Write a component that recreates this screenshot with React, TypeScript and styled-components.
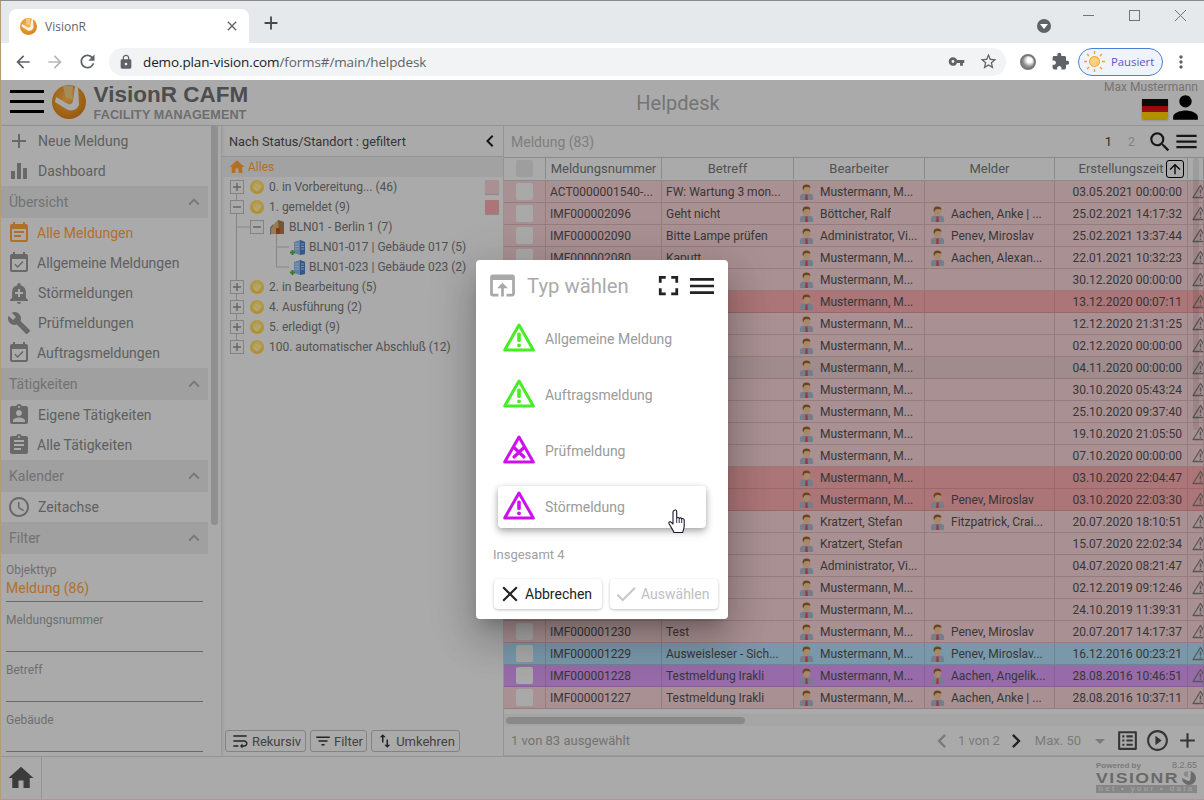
import React from 'react';
import styled, { createGlobalStyle } from 'styled-components';
import {
  MdAdd, MdEqualizer, MdExpandLess, MdEventNote, MdEventAvailable, MdAddAlert, MdBuild, MdAssignmentInd,
  MdAssignment, MdAccessTime, MdHome, MdChevronLeft, MdChevronRight, MdSearch, MdMenu, MdArrowDropDown,
  MdListAlt, MdPlayCircleOutline, MdPerson, MdArrowUpward, MdOpenInBrowser, MdFullscreen, MdClose, MdCheck,
  MdWrapText, MdFilterList, MdSwapVert, MdArrowBack, MdArrowForward, MdRefresh, MdLock, MdVpnKey, MdStarBorder,
  MdExtension, MdMoreVert,
} from 'react-icons/md';

const Global = createGlobalStyle`
  html, body { margin: 0; padding: 0; overflow: hidden; background: #fff; }
  * { box-sizing: border-box; }
`;

const Root = styled.div`
  position: relative; width: 1204px; height: 800px; overflow: hidden; display: flex; flex-direction: column;
  border-top: 1px solid #8a8a8a; border-left: 1px solid #b69a78; border-bottom: 1px solid #b69a78;
  font-family: Roboto, "Liberation Sans", sans-serif;
`;

/* browser chrome */
const TabStrip = styled.div`
  height: 42px; flex: none; background: #e6e9ec; display: flex; align-items: flex-end; padding-left: 8px; position: relative;
`;
const Tab = styled.div`
  width: 240px; height: 34px; background: #fff; border-radius: 8px 8px 0 0; display: flex; align-items: center;
  padding: 0 9px 0 11px; color: #5f6368; font: 12px "Open Sans", "Noto Sans", sans-serif;
`;
const TabTitle = styled.span` margin-left: 8px; flex: 1; `;
const NewTab = styled.div` margin: 0 0 6px 10px; height: 28px; width: 24px; display: flex; align-items: center; justify-content: center; color: #45494d; `;
const Spacer = styled.div` flex: 1; `;
const ProfileDot = styled.div`
  width: 14px; height: 14px; border-radius: 50%; background: #5f6368; position: absolute; left: 1036px; top: 18px;
  &::after { content: ''; position: absolute; left: 3px; top: 5px; border: 4px solid transparent; border-top: 5px solid #fff; border-bottom: 0; }
`;
const WinControls = styled.div` position: absolute; right: 1px; top: 0; height: 30px; display: flex; color: #70757a; `;
const WinBtn = styled.div` width: 46px; height: 29px; display: flex; align-items: center; justify-content: center; `;

const BrowserBar = styled.div` height: 37px; flex: none; background: #fff; display: flex; align-items: center; padding-left: 6px; color: #5f6368; position: relative; `;
const NavBtn = styled.div<{ $dim?: boolean }>` width: 32px; display: flex; justify-content: center; color: ${p => (p.$dim ? '#b4b7ba' : '#5f6368')}; `;
const Address = styled.div`
  margin-left: 6px; width: 897px; height: 28px; border-radius: 14px; background: #f1f3f4; display: flex; align-items: center;
  padding: 0 2px 0 9px; font: 13.5px "Open Sans", "Noto Sans", sans-serif; color: #5f6368;
`;
const Url = styled.span` margin-left: 9px; flex: 1; letter-spacing: -0.12px; b { font-weight: 400; color: #202124; } `;
const AddrIcon = styled.span` width: 32px; display: flex; justify-content: center; `;
const ExtIcon = styled.div` width: 32px; display: flex; justify-content: center; `;
const OrbSlot = styled(ExtIcon)` margin-left: 6px; `;
const Orb = styled.div` width: 16px; height: 16px; border-radius: 50%; border: 2px solid #777; background: radial-gradient(circle at 62% 35%, #fff 0 22%, #888 62%); `;
const Paused = styled.div`
  margin-left: 2px; width: 85px; height: 28px; border: 1px solid #4a80d8; border-radius: 14px; background: #eef3fc; display: flex; align-items: center;
  padding-left: 4px; gap: 5px; font: 11.3px "Open Sans", "Noto Sans", sans-serif; color: #5a58c4; white-space: nowrap;
`;
const DotsBtn = styled.div` margin-left: 2px; width: 32px; display: flex; justify-content: center; color: #5f6368; `;

/* app header */
const App = styled.div` flex: 1; display: flex; flex-direction: column; min-height: 0; background: #f4f4f4; `;
const Header = styled.header` height: 46px; flex: none; border-bottom: 1px solid #d4d4d4; display: flex; align-items: stretch; padding-left: 9px; `;
const Burger = styled.div`
  width: 34px; margin-top: 10px; height: 23px; display: flex; flex-direction: column; justify-content: space-between;
  span { height: 3.4px; background: #000; display: block; }
`;
const LogoBox = styled.div` margin: 5px 0 0 8px; `;
const Brand = styled.div` margin: 2px 0 0 8px; width: 160px; font-family: "Liberation Sans", Arial, sans-serif; font-weight: 700; `;
const BrandTop = styled.div` font-size: 22.5px; line-height: 26px; color: #6f6f6f; white-space: nowrap; `;
const BrandSub = styled.div` font-size: 12.6px; line-height: 13px; margin-top: 1px; color: #9d9d9d; white-space: nowrap; letter-spacing: 0.1px; `;
const PageTitle = styled.div` width: 862px; text-align: center; font-size: 20px; line-height: 46px; color: #a8a8a8; `;
const UserBox = styled.div` flex: 1; display: flex; flex-direction: column; align-items: flex-end; padding-right: 6px; `;
const UserName = styled.div` font-size: 12px; line-height: 15px; color: #aea69e; white-space: nowrap; `;
const UserIcons = styled.div` display: flex; align-items: center; gap: 5px; margin-top: 0; color: #000; `;
const Flag = styled.div` width: 26px; height: 20px; margin-top: 2px; background: linear-gradient(#111 0 34%, #dd1111 34% 67%, #fc0 67%); box-shadow: 0 1px 2px rgba(0,0,0,.3); `;
const PersonSlot = styled.div` width: 25px; height: 25px; display: flex; align-items: center; justify-content: center; svg { flex: none; } `;

const Body = styled.div` flex: 1; min-height: 0; display: flex; `;

/* sidebar */
const Sidebar = styled.aside` width: 221px; flex: none; display: flex; overflow: hidden; border-right: 1px solid #dcdcdc; box-shadow: 1px 0 3px rgba(0,0,0,.08); `;
const SideContent = styled.div` width: 207px; flex: none; `;
const SideTrack = styled.div` flex: 1; padding: 0 3px 0 3px; `;
const SideThumb = styled.div` width: 7px; height: 399px; background: #cecece; border-radius: 0 0 3px 3px; `;
const SideItem = styled.div<{ $active?: boolean; $tight?: boolean }>`
  height: 30px; display: flex; align-items: center; padding-left: 6px; gap: ${p => (p.$tight ? '6px' : '7px')}; font-size: 14px; white-space: nowrap;
  color: ${p => (p.$active ? '#ffa139' : '#8a8a8a')};
  svg { color: ${p => (p.$active ? '#ffa139' : '#969696')}; flex: none; }
`;
const Section = styled.div`
  height: 32px; background: #e5e5e5; display: flex; align-items: center; justify-content: space-between; padding: 0 3px 0 8px; font-size: 14px; color: #a4a4a4;
  svg { color: #acacac; }
`;
const Field = styled.div` height: 50px; margin: 0 5px 0 5px; border-bottom: 1px solid #969696; padding-top: 11px; `;
const FirstField = styled(Field)` margin-top: -2px; `;
const FieldLabel = styled.div` font-size: 12px; line-height: 15px; color: #a0a0a0; `;
const FieldValue = styled.div` font-size: 14px; line-height: 18px; margin-top: 1px; color: #ffa139; `;

/* tree */
const TreePanel = styled.section` width: 282px; flex: none; display: flex; flex-direction: column; border-right: 1px solid #d4d4d4; `;
const TreeHead = styled.div`
  height: 31px; flex: none; border-bottom: 1px solid #d4d4d4; display: flex; align-items: center; justify-content: space-between; padding: 0 1px 0 7px;
  font-size: 12.75px; color: #4d4d4d; svg { color: #222; }
`;
const TreeRoot = styled.div` height: 20px; flex: none; background: #e9e9e9; display: flex; align-items: center; padding-left: 6px; gap: 2px; font-size: 12px; color: #ffa139; svg { color: #ffa139; } `;
const Tree = styled.div` position: relative; flex: 1; `;
const TreeGuides = styled.svg` position: absolute; left: 0; top: 0; `;
const TreeRow = styled.div<{ $level: number }>`
  position: relative; height: 20px; display: flex; align-items: center; gap: 5px; padding-left: ${p => 8 + p.$level * 20}px; font-size: 12px; color: #767676; white-space: nowrap;
`;
const TreeLabel = styled.span` margin-left: 0; `;
const Tag = styled.span<{ $strong?: boolean }>`
  position: absolute; left: 263px; top: 3px; width: 14px; height: 14px; border-radius: 1px; box-shadow: 0 1px 1px rgba(0,0,0,.2);
  background: ${p => (p.$strong ? '#f6a8ab' : '#f3ced2')};
`;
const TreeActions = styled.div` height: 30px; flex: none; display: flex; gap: 4px; padding: 0 0 4px 3px; align-items: flex-end; `;
const SmallBtn = styled.div<{ $w: number }>`
  width: ${p => p.$w}px; height: 22px; border: 1px solid #bcbcbc; border-radius: 3px; display: flex; align-items: center; justify-content: center; gap: 2px;
  font-size: 13px; color: #5e5e5e; svg { color: #333; flex: none; }
`;

/* main */
const Main = styled.main` flex: 1; min-width: 0; display: flex; flex-direction: column; `;
const MainHead = styled.div` height: 31px; flex: none; display: flex; align-items: center; padding: 0 4px 0 7px; font-size: 14px; color: #b5b5b5; `;
const PageNo = styled.span<{ $on?: boolean }>` font-size: 13px; width: 23px; text-align: center; color: ${p => (p.$on ? '#444' : '#bcbcbc')}; `;
const HeadIcons = styled.div` display: flex; align-items: center; margin-left: 4px; color: #222; `;
const TableWrap = styled.div` position: relative; flex: 1; min-height: 0; overflow: hidden; `;
const COLS = '42px 116px 132px 131px 130px 133px 16px';
const HeadRow = styled.div`
  display: grid; grid-template-columns: ${COLS}; height: 24px; padding-bottom: 1px; border-top: 1px solid #c8c8c8; border-bottom: 1px solid #c8c8c8; font-size: 13px; color: #767676;
`;
const HeadCell = styled.div`
  position: relative; display: flex; align-items: center; justify-content: center; border-right: 1px solid #c8c8c8; white-space: nowrap;
`;
const Row = styled.div<{ $bg: string }>`
  display: grid; grid-template-columns: ${COLS}; height: 22px; background: ${p => p.$bg}; border-bottom: 1px solid rgba(120,80,85,.22); font-size: 12px; color: #505050;
`;
const Cell = styled.div<{ $right?: boolean }>`
  display: flex; align-items: center; gap: 6px; padding: 0 ${p => (p.$right ? '5px' : '4px')} 0 4px; border-right: 1px solid rgba(120,80,85,.22); min-width: 0;
  justify-content: ${p => (p.$right ? 'flex-end' : 'flex-start')}; white-space: nowrap; overflow: hidden;
`;
const CheckCell = styled(Cell)` justify-content: center; padding: 0; `;
const CheckBox = styled.span<{ $head?: boolean }>` width: 17px; height: 17px; border-radius: 2px; background: ${p => (p.$head ? '#e3e3e3' : '#f3f3f3')}; flex: none; `;
const Txt = styled.span` overflow: hidden; text-overflow: ellipsis; `;
const SortBtn = styled.span`
  position: absolute; right: 3px; top: 2px; width: 18px; height: 18px; border: 1px solid #000; border-radius: 3px; display: flex; align-items: center; justify-content: center; color: #000;
`;
const VThumb = styled.div` position: absolute; right: 5px; top: 1px; width: 6px; height: 272px; border-radius: 3px; background: rgba(0,0,0,.08); `;
const HScroll = styled.div` height: 12px; flex: none; background: #ededed; padding: 3px 0 0 2px; `;
const HThumb = styled.div` width: 239px; height: 7px; border-radius: 4px; background: #c5c5c5; `;
const StatusBar = styled.div` height: 30px; flex: none; display: flex; align-items: center; padding: 0 4px 0 7px; font-size: 13px; color: #a4a4a4; border-bottom: 1px solid #dcdcdc; `;
const Pager = styled.div` display: flex; align-items: center; color: #b0b0b0; `;
const PagerText = styled.span` margin: 0 2px 0 2px; `;
const MaxText = styled.span` margin-left: 5px; margin-right: 7px; `;
const Dark = styled.span` display: flex; color: #333; `;
const Tools = styled.div` display: flex; align-items: center; color: #4c4c4c; gap: 5px; margin-left: 3px; `;

/* footer */
const Footer = styled.footer` height: 43px; flex: none; border-top: 1px solid #d4d4d4; display: flex; `;
const HomeBtn = styled.div` width: 41px; border-right: 1px solid #d4d4d4; display: flex; align-items: center; justify-content: center; color: #555; `;
const Powered = styled.div` margin-left: auto; width: 101px; margin-right: 7px; padding-top: 3px; font-family: "Liberation Sans", Arial, sans-serif; `;
const PoweredTop = styled.div` display: flex; justify-content: space-between; font-size: 8px; line-height: 11px; font-weight: 700; color: #aeaeae; span + span { font-size: 9px; font-weight: 400; color: #a6a6a6; } `;
const PoweredMid = styled.div` display: flex; justify-content: space-between; align-items: center; height: 13px; color: #989898; svg { flex: none; } `;
const PoweredWord = styled.span` font-size: 15.5px; font-weight: 700; letter-spacing: 1.3px; display: inline-block; transform: scaleX(1.14); transform-origin: left; `;
const Band = styled.div` margin-top: 1px; height: 8px; background: #c0c0c0; color: #efefef; font-size: 8px; line-height: 8px; letter-spacing: 2.3px; text-align: center; white-space: nowrap; overflow: hidden; `;

/* dialog */
const Scrim = styled.div` position: absolute; left: -1px; right: 0; top: 79px; bottom: 0; background: rgba(0,0,0,.3); display: flex; align-items: center; justify-content: center; `;
const Modal = styled.div`
  width: 252px; height: 359px; background: #fff; border-radius: 4px; position: relative; display: flex; flex-direction: column;
  box-shadow: 0 11px 15px -7px rgba(0,0,0,.2), 0 24px 38px 3px rgba(0,0,0,.14), 0 9px 46px 8px rgba(0,0,0,.12);
`;
const ModalHead = styled.div` height: 51px; flex: none; display: flex; align-items: center; padding: 0 10px 0 10px; `;
const ModalIcon = styled.span` display: flex; color: #a9a9a9; `;
const ModalTitle = styled.div` margin-left: 8px; flex: 1; font-size: 20.3px; color: #aaa; white-space: nowrap; `;
const ModalTools = styled.div` display: flex; align-items: center; color: #222; gap: 1px; `;
const TypeList = styled.div` display: flex; flex-direction: column; padding-left: 22px; `;
const TypeItem = styled.div<{ $hover?: boolean }>`
  height: 42px; width: 208px; margin: 7px 0; display: flex; align-items: center; padding-left: 5px; gap: 10px; font-size: 14px; color: #9b9b9b; border-radius: 4px;
  box-shadow: ${p => (p.$hover ? '0 2px 6px rgba(0,0,0,.3), 0 6px 10px rgba(0,0,0,.1)' : 'none')};
  svg { margin-bottom: 4px; }
`;
const Total = styled.div` margin: 12px 0 0 17px; font-size: 13px; line-height: 16px; color: #a0a0a0; `;
const ModalActions = styled.div` display: flex; gap: 8px; margin: 16px 0 0 18px; `;
const ActionBtn = styled.div<{ $off?: boolean }>`
  width: 108px; height: 30px; border-radius: 4px; display: flex; align-items: center; padding-left: 3px; gap: 2px; font-size: 14px;
  color: ${p => (p.$off ? '#c0c0c0' : '#222')}; box-shadow: 0 1px 3px rgba(0,0,0,.25);
  svg { color: ${p => (p.$off ? '#c8c8c8' : '#222')}; flex: none; }
`;
const HandCursor = styled.svg` position: absolute; left: 192px; top: 249px; `;

/* drawings */
const Sphere = ({ size }: { size: number }) => (
  <svg width={size} height={size} viewBox="0 0 34 34">
    <defs>
      <radialGradient id="sph" cx="45%" cy="40%" r="65%"><stop offset="0" stopColor="#ffb84a" /><stop offset="1" stopColor="#d97a10" /></radialGradient>
    </defs>
    <circle cx="17" cy="17" r="17" fill="url(#sph)" />
    <path d="M11 1 L21 0.5 L20.5 15 L13.5 12 Z" fill="#f3c77c" />
    <path d="M4 12 L16 19 Q20 20 21 16 L23 1 L26 2.5 L27 20 Q24 27 16 25 L3 17 Z" fill="#f2f2f2" />
  </svg>
);
const GraySphere = () => (
  <svg width="16" height="14" viewBox="0 0 34 30">
    <path d="M17 0 A15 15 0 1 1 2 15 L14 21 Q19 22 20 17 L21 0 Z" fill="#9a9a9a" />
    <path d="M6 2 L15 0 V14 L6 10 Z" fill="#c6c6c6" />
  </svg>
);
const Ball = () => (
  <svg width="14" height="14" viewBox="0 0 14 14" style={{ flex: 'none', marginLeft: 1 }}>
    <defs><radialGradient id="bal" cx="50%" cy="40%" r="60%"><stop offset="0" stopColor="#fff0a0" /><stop offset="1" stopColor="#ffc830" /></radialGradient></defs>
    <circle cx="7" cy="7" r="7" fill="url(#bal)" />
    <path d="M3.5 6 L7 10 L10.5 4 L10.5 7 L7 11.5 L3.5 8 Z" fill="#fff6d0" />
  </svg>
);
const ExpandBox = ({ open }: { open?: boolean }) => (
  <svg width="14" height="14" viewBox="0 0 14 14" style={{ flex: 'none', position: 'relative' }}>
    <rect x="0.5" y="0.5" width="13" height="13" fill="#f4f4f4" stroke="#bcbcbc" />
    <path d={open ? 'M3 7H11' : 'M3 7H11M7 3V11'} stroke="#8e8e8e" strokeWidth="1.4" />
  </svg>
);
const HouseIcon = () => (
  <svg width="15" height="16" viewBox="0 0 15 16" style={{ flex: 'none', marginLeft: 1, marginRight: -1 }}>
    <path d="M1 15 V8 L8 1 L14 3 V15 Z" fill="#d8b27a" />
    <path d="M8 1 L14 3 V15 H9 Z" fill="#a77b46" />
    <rect x="6" y="9" width="4" height="6" fill="#c8501e" />
    <path d="M0.5 15.5 V9 L3 6" fill="none" stroke="#8b8b8b" strokeWidth="1.2" />
  </svg>
);
const BuildingIcon = () => (
  <svg width="16" height="17" viewBox="0 0 16 17" style={{ flex: 'none', marginRight: -2 }}>
    <path d="M4 3 L10 1 L15 3 V15 L10 16 L4 14 Z" fill="#8ab6e8" />
    <path d="M10 1 L15 3 V15 L10 16 Z" fill="#4a7fc4" />
    <path d="M5 5 H9 M5 7.5 H9 M5 10 H9 M11 5 H14 M11 7.5 H14 M11 10 H14" stroke="#d8e8f8" strokeWidth=".8" />
    <path d="M0 13.5 H5 M2.5 11 V16" stroke="#4fb04a" strokeWidth="2" />
  </svg>
);
const PersonIcon = () => (
  <svg width="15" height="16" viewBox="0 0 16 17" style={{ flex: 'none', marginLeft: 1 }}>
    <path d="M1 17 V13.5 Q1 10.5 5.5 10 L8 11 L10.5 10 Q15 10.5 15 13.5 V17 Z" fill="#a6b6c8" />
    <path d="M7 11 H9 L9.5 17 H6.5 Z" fill="#e0525a" />
    <ellipse cx="8" cy="5.5" rx="4" ry="4.8" fill="#eec39a" />
    <path d="M3.8 5 Q3.5 0.5 8 0.5 Q12 0.5 12.2 4 Q9 2.5 6.5 3.4 Q5 4 4.6 6.5 Z" fill="#9b6424" />
  </svg>
);
const Warn = ({ color, wrench }: { color: string; wrench?: boolean }) => (
  <svg width="32" height="29" viewBox="0 0 32 29" style={{ flex: 'none' }}>
    <path d="M16 2 L30.3 27 H1.7 Z" fill="none" stroke={color} strokeWidth="3" strokeLinejoin="round" />
    {wrench ? (
      <path d="M11 12.5 L21 22 M21 12.5 L11 22" fill="none" stroke={color} strokeWidth="3.2" strokeLinecap="round" />
    ) : (
      <>
        <rect x="14.2" y="9.5" width="3.6" height="9.5" rx="1.6" fill={color} />
        <circle cx="16" cy="22.3" r="1.9" fill={color} />
      </>
    )}
  </svg>
);
const MiniWarn = () => (
  <svg width="17" height="15" viewBox="0 0 17 15" style={{ flex: 'none' }}>
    <path d="M8.5 1.5 L16 13.5 H1 Z" fill="none" stroke="#7d7d7d" strokeWidth="1.3" strokeLinejoin="round" />
    <path d="M8.5 5.5 V9.5 M8.5 10.7 V12" stroke="#7d7d7d" strokeWidth="1.6" />
  </svg>
);
const Sun = () => (
  <svg width="23" height="23" viewBox="0 0 23 23" style={{ flex: 'none' }}>
    <circle cx="11.5" cy="11.5" r="5" fill="#ffd27a" stroke="#f2a02e" />
    <path d="M11.5 1V4M11.5 19V22M1 11.5H4M19 11.5H22M4 4L6 6M17 17L19 19M4 19L6 17M17 6L19 4" stroke="#f2a02e" strokeWidth="1.4" />
  </svg>
);

type R = { id?: string; sub?: string; a: string; m?: string; d: string; bg?: 'p' | 'd' | 'g' | 'b' | 'v' };
const M = 'Mustermann, M...';
const rows: R[] = [
  { id: 'ACT0000001540-...', sub: 'FW: Wartung 3 mon...', a: M, d: '03.05.2021 00:00:00' },
  { id: 'IMF000002096', sub: 'Geht nicht', a: 'Böttcher, Ralf', m: 'Aachen, Anke | ...', d: '25.02.2021 14:17:32' },
  { id: 'IMF000002090', sub: 'Bitte Lampe prüfen', a: 'Administrator, Vi...', m: 'Penev, Miroslav', d: '25.02.2021 13:37:44' },
  { id: 'IMF000002080', sub: 'Kaputt', a: M, m: 'Aachen, Alexan...', d: '22.01.2021 10:32:23' },
  { a: M, d: '30.12.2020 00:00:00' },
  { a: M, d: '13.12.2020 00:07:11', bg: 'd' },
  { a: M, d: '12.12.2020 21:31:25' },
  { a: M, d: '02.12.2020 00:00:00' },
  { a: M, d: '04.11.2020 00:00:00', bg: 'g' },
  { a: M, d: '30.10.2020 05:43:24' },
  { a: M, d: '25.10.2020 09:37:40' },
  { a: M, d: '19.10.2020 21:05:50' },
  { a: M, d: '07.10.2020 00:00:00' },
  { a: M, d: '03.10.2020 22:04:47', bg: 'd' },
  { a: M, m: 'Penev, Miroslav', d: '03.10.2020 22:03:30', bg: 'd' },
  { a: 'Kratzert, Stefan', m: 'Fitzpatrick, Crai...', d: '20.07.2020 18:10:51' },
  { a: 'Kratzert, Stefan', d: '15.07.2020 22:02:34' },
  { a: 'Administrator, Vi...', d: '04.07.2020 08:21:47' },
  { a: M, d: '02.12.2019 09:12:46' },
  { a: M, d: '24.10.2019 11:39:31' },
  { id: 'IMF000001230', sub: 'Test', a: M, m: 'Penev, Miroslav', d: '20.07.2017 14:17:37' },
  { id: 'IMF000001229', sub: 'Ausweisleser - Sich...', a: M, m: 'Penev, Miroslav...', d: '16.12.2016 00:23:21', bg: 'b' },
  { id: 'IMF000001228', sub: 'Testmeldung Irakli', a: M, m: 'Aachen, Angelik...', d: '28.08.2016 10:46:51', bg: 'v' },
  { id: 'IMF000001227', sub: 'Testmeldung Irakli', a: M, m: 'Aachen, Anke | ...', d: '28.08.2016 10:37:11' },
];
const bgs = { p: '#f3ced2', d: '#f6a8ab', g: '#e6c8cb', b: '#aedcf5', v: '#d99af3' };

const tree: { level: number; label: string; open?: boolean; kind: 'ball' | 'house' | 'building'; tag?: 'l' | 's'; box?: boolean }[] = [
  { level: 0, label: '0. in Vorbereitung... (46)', kind: 'ball', tag: 'l', box: true },
  { level: 0, label: '1. gemeldet (9)', kind: 'ball', open: true, tag: 's', box: true },
  { level: 1, label: 'BLN01 - Berlin 1 (7)', kind: 'house', open: true, box: true },
  { level: 3, label: 'BLN01-017 | Gebäude 017 (5)', kind: 'building' },
  { level: 3, label: 'BLN01-023 | Gebäude 023 (2)', kind: 'building' },
  { level: 0, label: '2. in Bearbeitung (5)', kind: 'ball', box: true },
  { level: 0, label: '4. Ausführung (2)', kind: 'ball', box: true },
  { level: 0, label: '5. erledigt (9)', kind: 'ball', box: true },
  { level: 0, label: '100. automatischer Abschluß (12)', kind: 'ball', box: true },
];

export default function AppPage() {
  return (
    <Root>
      <Global />
      <TabStrip>
        <Tab>
          <Sphere size={17} />
          <TabTitle>VisionR</TabTitle>
          <MdClose size={16} />
        </Tab>
        <NewTab><MdAdd size={22} /></NewTab>
        <Spacer />
        <ProfileDot />
        <WinControls>
          <WinBtn>
            <svg width="11" height="11" viewBox="0 0 11 11"><path d="M0 5.5H11" stroke="currentColor" /></svg>
          </WinBtn>
          <WinBtn>
            <svg width="11" height="11" viewBox="0 0 11 11"><rect x=".5" y=".5" width="10" height="10" fill="none" stroke="currentColor" /></svg>
          </WinBtn>
          <WinBtn>
            <svg width="11" height="11" viewBox="0 0 11 11"><path d="M0 0L11 11M11 0L0 11" stroke="currentColor" /></svg>
          </WinBtn>
        </WinControls>
      </TabStrip>
      <BrowserBar>
        <NavBtn><MdArrowBack size={20} /></NavBtn>
        <NavBtn $dim><MdArrowForward size={20} /></NavBtn>
        <NavBtn><MdRefresh size={21} /></NavBtn>
        <Address>
          <MdLock size={16} />
          <Url><b>demo.plan-vision.com</b>/forms#/main/helpdesk</Url>
          <AddrIcon><MdVpnKey size={17} /></AddrIcon>
          <AddrIcon><MdStarBorder size={19} /></AddrIcon>
        </Address>
        <OrbSlot><Orb /></OrbSlot>
        <ExtIcon><MdExtension size={19} /></ExtIcon>
        <Paused><Sun />Pausiert</Paused>
        <DotsBtn><MdMoreVert size={20} /></DotsBtn>
      </BrowserBar>
      <App>
        <Header>
          <Burger><span /><span /><span /></Burger>
          <LogoBox><Sphere size={34} /></LogoBox>
          <Brand>
            <BrandTop>VisionR CAFM</BrandTop>
            <BrandSub>FACILITY MANAGEMENT</BrandSub>
          </Brand>
          <PageTitle>Helpdesk</PageTitle>
          <UserBox>
            <UserName>Max Mustermann</UserName>
            <UserIcons><Flag /><PersonSlot><MdPerson size={37} /></PersonSlot></UserIcons>
          </UserBox>
        </Header>
        <Body>
          <Sidebar>
            <SideContent>
              <SideItem><MdAdd size={24} />Neue Meldung</SideItem>
              <SideItem><MdEqualizer size={24} />Dashboard</SideItem>
              <Section>Übersicht<MdExpandLess size={22} /></Section>
              <SideItem $active $tight><MdEventNote size={24} />Alle Meldungen</SideItem>
              <SideItem $tight><MdEventAvailable size={24} />Allgemeine Meldungen</SideItem>
              <SideItem><MdAddAlert size={24} />Störmeldungen</SideItem>
              <SideItem><MdBuild size={24} />Prüfmeldungen</SideItem>
              <SideItem $tight><MdEventAvailable size={24} />Auftragsmeldungen</SideItem>
              <Section>Tätigkeiten<MdExpandLess size={22} /></Section>
              <SideItem><MdAssignmentInd size={24} />Eigene Tätigkeiten</SideItem>
              <SideItem $tight><MdAssignment size={24} />Alle Tätigkeiten</SideItem>
              <Section>Kalender<MdExpandLess size={22} /></Section>
              <SideItem><MdAccessTime size={24} />Zeitachse</SideItem>
              <Section>Filter<MdExpandLess size={22} /></Section>
              <FirstField><FieldLabel>Objekttyp</FieldLabel><FieldValue>Meldung (86)</FieldValue></FirstField>
              <Field><FieldLabel>Meldungsnummer</FieldLabel></Field>
              <Field><FieldLabel>Betreff</FieldLabel></Field>
              <Field><FieldLabel>Gebäude</FieldLabel></Field>
            </SideContent>
            <SideTrack><SideThumb /></SideTrack>
          </Sidebar>
          <TreePanel>
            <TreeHead>Nach Status/Standort : gefiltert<MdChevronLeft size={24} /></TreeHead>
            <TreeRoot><MdHome size={18} />Alles</TreeRoot>
            <Tree>
              <TreeGuides width="282" height="190">
                <path d="M14.5 10V170M34 50H14.5M54.5 50V90M54.5 70H67M54.5 90H67" fill="none" stroke="#c0c0c0" />
              </TreeGuides>
              {tree.map(t => (
                <TreeRow key={t.label} $level={t.level}>
                  {t.box && <ExpandBox open={t.open} />}
                  {t.kind === 'ball' && <Ball />}
                  {t.kind === 'house' && <HouseIcon />}
                  {t.kind === 'building' && <BuildingIcon />}
                  <TreeLabel>{t.label}</TreeLabel>
                  {t.tag && <Tag $strong={t.tag === 's'} />}
                </TreeRow>
              ))}
            </Tree>
            <TreeActions>
              <SmallBtn $w={81}><MdWrapText size={20} />Rekursiv</SmallBtn>
              <SmallBtn $w={57}><MdFilterList size={18} />Filter</SmallBtn>
              <SmallBtn $w={89}><MdSwapVert size={18} />Umkehren</SmallBtn>
            </TreeActions>
          </TreePanel>
          <Main>
            <MainHead>
              Meldung (83)
              <Spacer />
              <PageNo $on>1</PageNo>
              <PageNo>2</PageNo>
              <HeadIcons><MdSearch size={26} /><MdMenu size={27} /></HeadIcons>
            </MainHead>
            <TableWrap>
              <HeadRow>
                <HeadCell><CheckBox $head /></HeadCell>
                <HeadCell>Meldungsnummer</HeadCell>
                <HeadCell>Betreff</HeadCell>
                <HeadCell>Bearbeiter</HeadCell>
                <HeadCell>Melder</HeadCell>
                <HeadCell>Erstellungszeit<SortBtn><MdArrowUpward size={16} /></SortBtn></HeadCell>
                <HeadCell />
              </HeadRow>
              {rows.map(r => (
                <Row key={r.d} $bg={bgs[r.bg || 'p']}>
                  <CheckCell><CheckBox /></CheckCell>
                  <Cell><Txt>{r.id}</Txt></Cell>
                  <Cell><Txt>{r.sub}</Txt></Cell>
                  <Cell><PersonIcon /><Txt>{r.a}</Txt></Cell>
                  <Cell>{r.m && <PersonIcon />}<Txt>{r.m}</Txt></Cell>
                  <Cell $right><Txt>{r.d}</Txt></Cell>
                  <Cell><MiniWarn /></Cell>
                </Row>
              ))}
              <VThumb />
            </TableWrap>
            <HScroll><HThumb /></HScroll>
            <StatusBar>
              1 von 83 ausgewählt
              <Spacer />
              <Pager>
                <MdChevronLeft size={28} />
                <PagerText>1 von 2</PagerText>
                <Dark><MdChevronRight size={28} /></Dark>
                <MaxText>Max. 50</MaxText>
                <MdArrowDropDown size={24} />
              </Pager>
              <Tools><MdListAlt size={25} /><MdPlayCircleOutline size={25} /><MdAdd size={25} /></Tools>
            </StatusBar>
          </Main>
        </Body>
        <Footer>
          <HomeBtn><MdHome size={30} /></HomeBtn>
          <Powered>
            <PoweredTop><span>Powered by</span><span>8.2.65</span></PoweredTop>
            <PoweredMid><PoweredWord>VISIONR</PoweredWord><GraySphere /></PoweredMid>
            <Band>net • your • data</Band>
          </Powered>
        </Footer>
      </App>
      <Scrim>
        <Modal>
          <ModalHead>
            <ModalIcon><MdOpenInBrowser size={33} /></ModalIcon>
            <ModalTitle>Typ wählen</ModalTitle>
            <ModalTools><MdFullscreen size={33} /><MdMenu size={32} /></ModalTools>
          </ModalHead>
          <TypeList>
            <TypeItem><Warn color="#44ee22" />Allgemeine Meldung</TypeItem>
            <TypeItem><Warn color="#44ee22" />Auftragsmeldung</TypeItem>
            <TypeItem><Warn color="#cc11ee" wrench />Prüfmeldung</TypeItem>
            <TypeItem $hover><Warn color="#cc11ee" />Störmeldung</TypeItem>
          </TypeList>
          <Total>Insgesamt 4</Total>
          <ModalActions>
            <ActionBtn><MdClose size={26} />Abbrechen</ActionBtn>
            <ActionBtn $off><MdCheck size={26} />Auswählen</ActionBtn>
          </ModalActions>
          <HandCursor width="18" height="25" viewBox="0 0 18 25">
            <path d="M6 1.5c1-1 2.7-.4 2.7 1V9c.6-.9 2.3-.7 2.5.4.7-.9 2.3-.7 2.5.5.7-.7 2.5-.3 2.5 1V17c0 2.5-1 4-1.5 6.5H6C5 21 2.2 17 1 14.5c-.6-1.4 1-2.4 2-1.4L5 15V3c0-.6.4-1.1 1-1.5z" fill="#fff" stroke="#1a1a2e" strokeWidth="1.1" strokeLinejoin="round" />
            <path d="M8.7 9V14M11.2 9.5V14M13.7 10V14" stroke="#1a1a2e" strokeWidth=".9" />
          </HandCursor>
        </Modal>
      </Scrim>
    </Root>
  );
}
